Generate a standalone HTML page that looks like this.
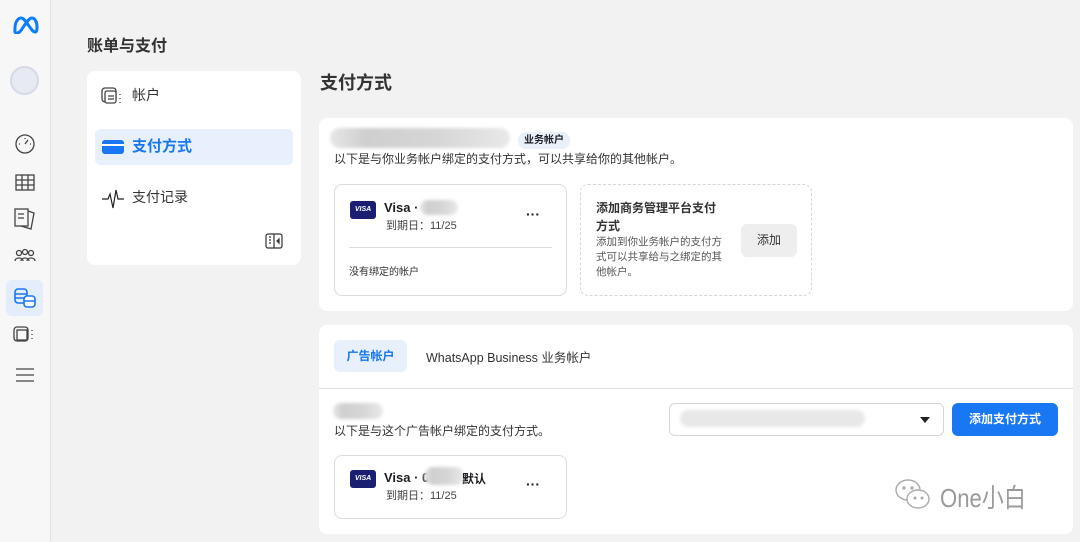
<!DOCTYPE html>
<html><head><meta charset="utf-8"><style>
*{margin:0;padding:0;box-sizing:border-box}
body{width:1080px;height:542px;overflow:hidden;background:#f2f2f2;font-family:"Liberation Sans","Noto Sans CJK SC",sans-serif;color:#1c1e21;position:relative}
.a{position:absolute}
.rail{left:0;top:0;width:51px;height:542px;background:#f7f7f7;border-right:1px solid #e2e2e2}
.card{background:#fff;border-radius:8px}
.blur{background:linear-gradient(90deg,#e6e6e6,#cfcfcf 20%,#d6d6d6 60%,#e9e9e9);border-radius:10px;filter:blur(1.5px)}
.visa{width:26px;height:18px;background:#1a1f71;border-radius:3px;color:#fff;font-size:7px;font-weight:bold;font-style:italic;text-align:center;line-height:18px}
</style></head><body>
<div class="a rail"></div>
<svg class="a" style="left:11px;top:14px" width="28" height="20" viewBox="0 0 28 20"><path d="M4 14c0-6 3-10 6-10s5 4 8 8 4 6 6 6 2-3 2-5c0-5-2-9-5-9s-5 4-8 8-4 7-7 7-2-2-2-5z" fill="none" stroke="#0a7cff" stroke-width="3"/></svg>
<div class="a" style="left:10px;top:66px;width:29px;height:29px;border-radius:50%;background:#e8eaf2;border:2px solid #d5d9e8"></div>
<svg class="a" style="left:13px;top:133px" width="24" height="260" viewBox="0 0 24 260" fill="none" stroke="#444" stroke-width="1.3">
<circle cx="12" cy="11" r="9"/><path d="M12 11l3-4M6 11h1M17 11h1M12 5v1"/>
<rect x="3" y="42" width="18" height="15"/><path d="M3 47h18M3 52h18M9 42v15M15 42v15"/>
<rect x="2" y="76" width="13" height="17"/><path d="M15 78l6 2-3 16-10-3M5 81h6M5 85h6"/>
<circle cx="6" cy="120" r="2.5"/><circle cx="12" cy="119" r="2.5"/><circle cx="18" cy="120" r="2.5"/><path d="M2 128c0-4 8-4 8 0M8 128c0-4 8-4 8 0M14 128c0-4 8-4 8 0"/>
<rect x="1" y="194" width="14" height="14" rx="3"/><rect x="4" y="197" width="10" height="10"/><path d="M19 197v1M19 201v1M19 205v1"/>
<path d="M3 236h18M3 242h18M3 248h18"/></svg>
<div class="a" style="left:6px;top:280px;width:37px;height:36px;background:#e4edfb;border-radius:6px"></div>
<svg class="a" style="left:14px;top:288px" width="22" height="20" viewBox="0 0 22 20" fill="none" stroke="#1877f2" stroke-width="1.6"><rect x="1" y="1" width="12" height="14" rx="3"/><rect x="10" y="8" width="11" height="11" rx="3" fill="#fff"/><path d="M1 6h12M1 10h9M10 13h11"/></svg>

<div class="a" style="left:87px;top:32px;font-size:16px;font-weight:bold;color:#333">账单与支付</div>
<div class="a card" style="left:87px;top:71px;width:214px;height:194px"></div>
<svg class="a" style="left:101px;top:86px" width="22" height="20" viewBox="0 0 22 20" fill="none" stroke="#444" stroke-width="1.3"><rect x="1" y="2" width="14" height="14" rx="3"/><rect x="4" y="5" width="11" height="12" rx="2" fill="#fff"/><path d="M7 10h6M7 13h6M19 8v1M19 12v1M19 16v1"/></svg>
<div class="a" style="left:132px;top:85px;font-size:14px;color:#333">帐户</div>
<div class="a" style="left:95px;top:129px;width:198px;height:36px;background:#e7f0fc;border-radius:6px"></div>
<div class="a" style="left:102px;top:140px;width:22px;height:14px;background:#1877f2;border-radius:3px"><div style="margin-top:4px;height:2px;background:#fff"></div></div>
<div class="a" style="left:132px;top:135px;font-size:15px;color:#1877f2;font-weight:bold">支付方式</div>
<svg class="a" style="left:101px;top:188px" width="24" height="22" viewBox="0 0 24 22" fill="none" stroke="#222" stroke-width="1.2"><path d="M1 11h6l2-5 3 14 3-18 2 9h6"/></svg>
<div class="a" style="left:132px;top:187px;font-size:14px;color:#333">支付记录</div>
<svg class="a" style="left:265px;top:233px" width="18" height="16" viewBox="0 0 18 16" fill="none" stroke="#333" stroke-width="1.2"><rect x="1" y="1" width="16" height="14" rx="2"/><path d="M9 1v14M4 4h2M4 7h2M4 10h2"/><path d="M14 6v4l-2-2z" fill="#333"/></svg>

<div class="a" style="left:320px;top:69px;font-size:18px;font-weight:bold;color:#333">支付方式</div>

<div class="a card" style="left:319px;top:118px;width:754px;height:193px"></div>
<div class="a blur" style="left:330px;top:128px;width:180px;height:20px"></div>
<div class="a" style="left:518px;top:132px;height:17px;padding:0 6px;background:#e9f0fa;border-radius:8px;font-size:10px;font-weight:bold;line-height:17px">业务帐户</div>
<div class="a" style="left:334px;top:150px;font-size:12px;color:#333">以下是与你业务帐户绑定的支付方式，可以共享给你的其他帐户。</div>
<div class="a" style="left:334px;top:184px;width:233px;height:112px;border:1px solid #dcdcdc;border-radius:8px"></div>
<div class="a visa" style="left:350px;top:201px">VISA</div>
<div class="a" style="left:384px;top:200px;font-size:13px;font-weight:bold">Visa ·</div>
<div class="a blur" style="left:420px;top:200px;width:38px;height:15px"></div>
<div class="a" style="left:386px;top:217px;font-size:11px;color:#444">到期日：11/25</div>
<div class="a" style="left:526px;top:206px;font-size:14px;font-weight:bold;letter-spacing:0">···</div>
<div class="a" style="left:349px;top:247px;width:203px;height:1px;background:#ddd"></div>
<div class="a" style="left:349px;top:263px;font-size:10px;color:#333">没有绑定的帐户</div>
<div class="a" style="left:580px;top:184px;width:232px;height:112px;border:1px dashed #d6d6d6;border-radius:8px"></div>
<div class="a" style="left:596px;top:199px;width:128px;font-size:12px;font-weight:bold;line-height:18px;color:#333">添加商务管理平台支付方式</div>
<div class="a" style="left:596px;top:235px;width:134px;font-size:10.5px;line-height:15px;color:#555">添加到你业务帐户的支付方式可以共享给与之绑定的其他帐户。</div>
<div class="a" style="left:741px;top:224px;width:56px;height:33px;background:#eee;border-radius:6px;font-size:12px;text-align:center;line-height:33px;color:#333">添加</div>

<div class="a card" style="left:319px;top:325px;width:754px;height:209px"></div>
<div class="a" style="left:334px;top:340px;width:73px;height:32px;background:#e7f0fc;border-radius:6px;font-size:12px;font-weight:bold;color:#1877f2;text-align:center;line-height:32px">广告帐户</div>
<div class="a" style="left:426px;top:347px;font-size:12.5px;color:#333">WhatsApp Business 业务帐户</div>
<div class="a" style="left:319px;top:388px;width:754px;height:1px;background:#ddd"></div>
<div class="a blur" style="left:333px;top:403px;width:50px;height:16px"></div>
<div class="a" style="left:334px;top:422px;font-size:12px;color:#333">以下是与这个广告帐户绑定的支付方式。</div>
<div class="a" style="left:669px;top:403px;width:275px;height:33px;border:1px solid #d6d6d6;border-radius:6px"></div>
<div class="a blur" style="left:680px;top:410px;width:185px;height:17px;background:#e8e8e8"></div>
<div class="a" style="left:920px;top:417px;width:0;height:0;border-left:5px solid transparent;border-right:5px solid transparent;border-top:6px solid #222"></div>
<div class="a" style="left:952px;top:403px;width:106px;height:33px;background:#1877f2;border-radius:6px;color:#fff;font-size:12px;font-weight:bold;text-align:center;line-height:33px">添加支付方式</div>
<div class="a" style="left:334px;top:455px;width:233px;height:64px;border:1px solid #dcdcdc;border-radius:8px"></div>
<div class="a visa" style="left:350px;top:470px">VISA</div>
<div class="a" style="left:384px;top:470px;font-size:13px;font-weight:bold">Visa · 0</div>
<div class="a blur" style="left:424px;top:467px;width:40px;height:18px"></div>
<div class="a" style="left:462px;top:470px;font-size:12px;font-weight:bold">默认</div>
<div class="a" style="left:386px;top:487px;font-size:11px;color:#444">到期日：11/25</div>
<div class="a" style="left:526px;top:476px;font-size:14px;font-weight:bold">···</div>
<svg class="a" style="left:893px;top:476px" width="40" height="36" viewBox="0 0 40 36" fill="none" stroke="#aaa" stroke-width="1.4"><ellipse cx="15" cy="14" rx="12" ry="10"/><ellipse cx="25" cy="23" rx="11" ry="9" fill="#fff"/><circle cx="11" cy="12" r="1"/><circle cx="19" cy="12" r="1"/><circle cx="22" cy="22" r="0.8"/><circle cx="29" cy="22" r="0.8"/></svg>
<div class="a" style="left:940px;top:478px;font-size:26px;color:#9a9a9a;font-weight:normal;transform:scaleX(0.85);transform-origin:left">One小白</div>
</body></html>
